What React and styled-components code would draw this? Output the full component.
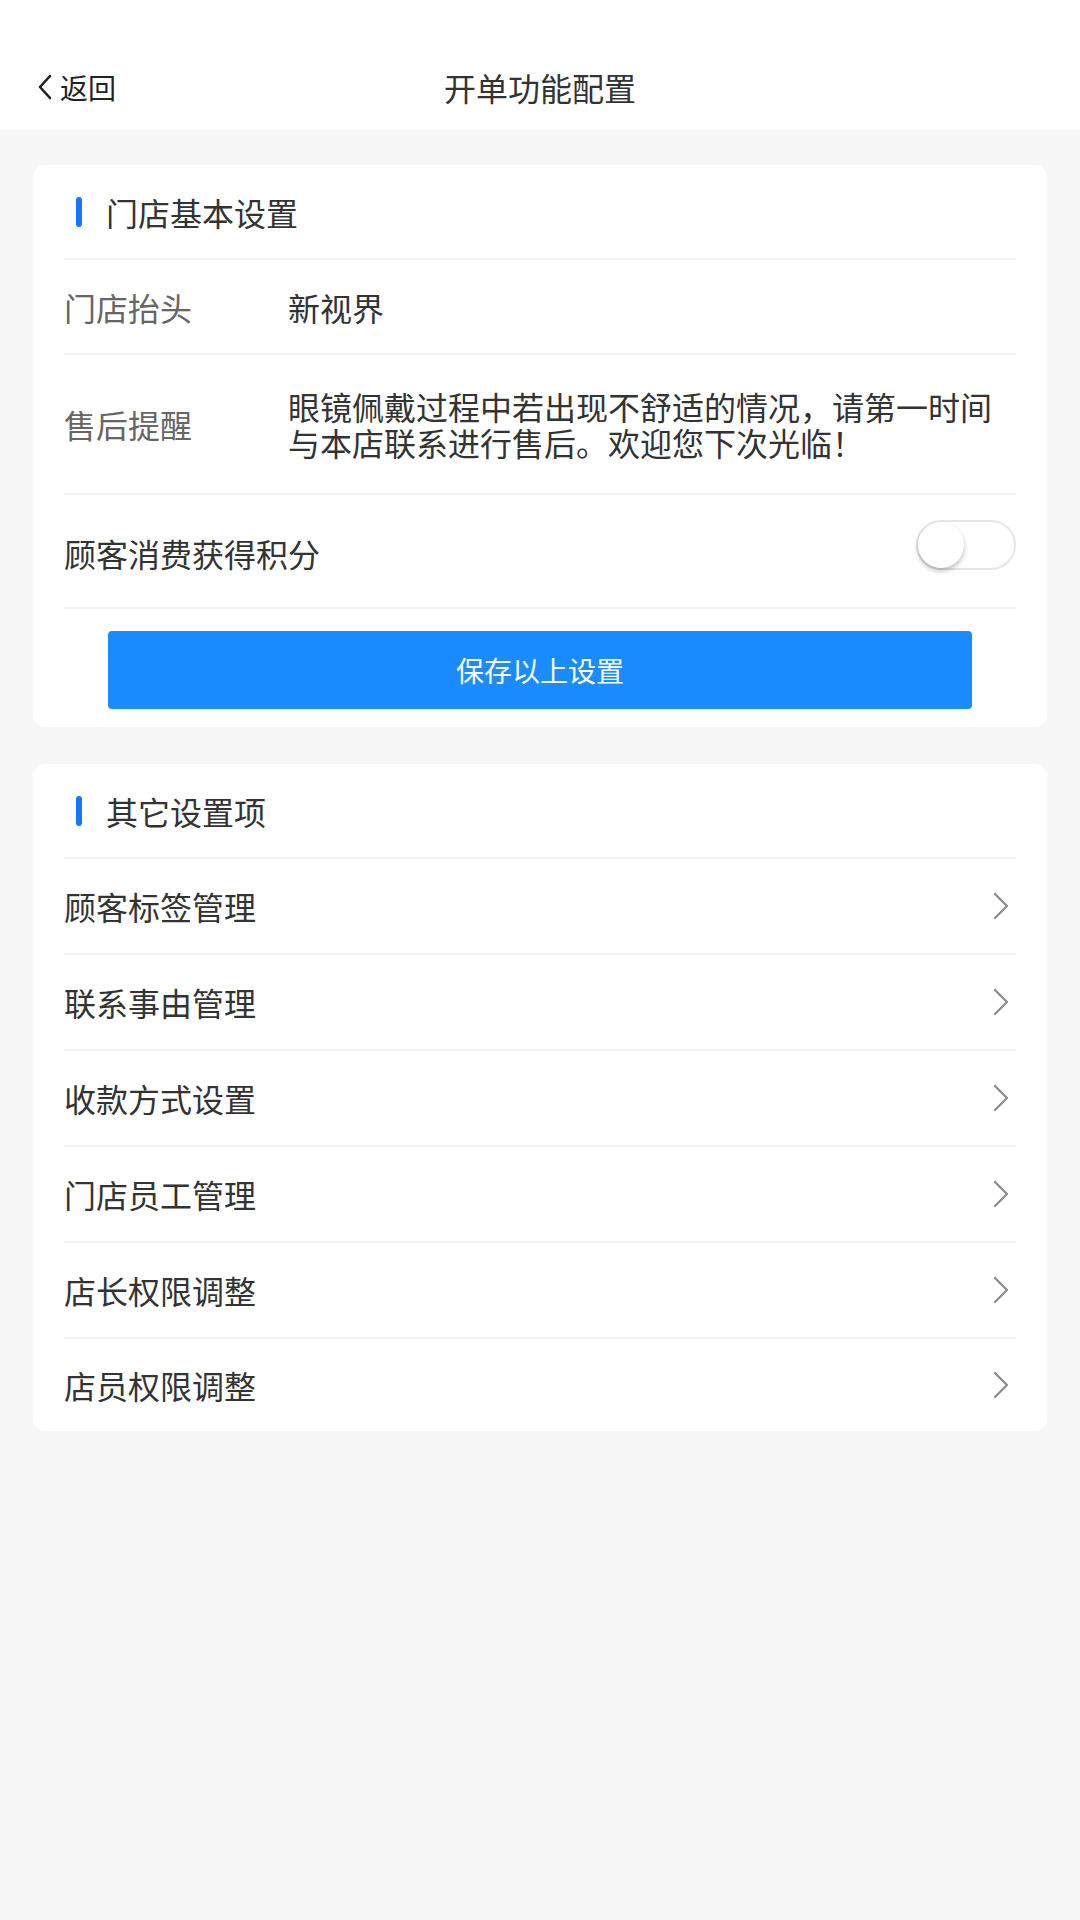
import React, { useState } from 'react'
import styled, { createGlobalStyle } from 'styled-components'

const GlobalStyle = createGlobalStyle`
  html, body {
    margin: 0;
    padding: 0;
    background: #f7f7f7;
    font-family: "Noto Sans CJK SC", "Noto Sans", sans-serif;
    color: #333;
  }
  * { box-sizing: border-box; }
`

const otherItems = [
  '顾客标签管理',
  '联系事由管理',
  '收款方式设置',
  '门店员工管理',
  '店长权限调整',
  '店员权限调整',
]

const App = () => {
  const [points, setPoints] = useState(false)

  return (
    <Page>
      <GlobalStyle />
      <Header>
        <NavBar>
          <Back>
            <svg width="16" height="26" viewBox="0 0 16 26" fill="none">
              <path d="M13 2 L3 13 L13 24" stroke="#222" strokeWidth="2.6" strokeLinecap="round" strokeLinejoin="round" />
            </svg>
            返回
          </Back>
          <Title>开单功能配置</Title>
        </NavBar>
      </Header>

      <Body>
        <Card>
          <SectionHead>门店基本设置</SectionHead>
          <FieldRow>
            <FieldLabel>门店抬头</FieldLabel>
            <FieldValue>新视界</FieldValue>
          </FieldRow>
          <FieldRow $tall>
            <FieldLabel>售后提醒</FieldLabel>
            <FieldValue>眼镜佩戴过程中若出现不舒适的情况，请第一时间与本店联系进行售后。欢迎您下次光临！</FieldValue>
          </FieldRow>
          <SwitchRow>
            <SwitchLabel>顾客消费获得积分</SwitchLabel>
            <Switch $on={points} onClick={() => setPoints(!points)}>
              <Knob $on={points} />
            </Switch>
          </SwitchRow>
          <ButtonWrap>
            <SaveButton>保存以上设置</SaveButton>
          </ButtonWrap>
        </Card>

        <Card>
          <SectionHead>其它设置项</SectionHead>
          {otherItems.map((item) => (
            <LinkRow key={item}>
              <span>{item}</span>
              <svg width="18" height="30" viewBox="0 0 18 30" fill="none">
                <path d="M3 3 L15 15 L3 27" stroke="#8a8a8a" strokeWidth="2.2" strokeLinecap="round" strokeLinejoin="round" />
              </svg>
            </LinkRow>
          ))}
        </Card>
      </Body>
    </Page>
  )
}

export default App

const Page = styled.div`
  min-height: 1920px;
  background: #f7f7f7;
`

const Header = styled.header`
  height: 130px;
  background: #fff;
  display: flex;
  align-items: flex-end;
`

const NavBar = styled.div`
  position: relative;
  width: 100%;
  height: 86px;
  display: flex;
  align-items: center;
  justify-content: center;
`

const Back = styled.div`
  position: absolute;
  left: 37px;
  top: 0;
  bottom: 0;
  display: flex;
  align-items: center;
  gap: 7px;
  font-size: 28px;
  color: #222;
`

const Title = styled.h1`
  margin: 0;
  font-size: 32px;
  font-weight: 400;
  color: #333;
`

const Body = styled.main`
  padding: 35px 33px;
  display: flex;
  flex-direction: column;
  gap: 37px;
`

const Card = styled.section`
  background: #fff;
  border-radius: 12px;
  padding: 0 31px;
`

const SectionHead = styled.div`
  height: 95px;
  display: flex;
  align-items: center;
  gap: 24px;
  padding-left: 12px;
  font-size: 32px;
  color: #333;
  border-bottom: 2px solid #f3f3f3;

  &::before {
    content: '';
    width: 6px;
    height: 30px;
    border-radius: 3px;
    background: #1577ff;
  }
`

const FieldRow = styled.div`
  display: flex;
  align-items: center;
  min-height: ${(p) => (p.$tall ? '140px' : '95px')};
  padding: 14px 0;
  border-bottom: 2px solid #f3f3f3;
`

const FieldLabel = styled.div`
  width: 224px;
  flex-shrink: 0;
  font-size: 32px;
  color: #666;
`

const FieldValue = styled.div`
  flex: 1;
  font-size: 32px;
  line-height: 36px;
  color: #333;
`

const SwitchRow = styled.div`
  height: 114px;
  display: flex;
  align-items: center;
  justify-content: space-between;
  border-bottom: 2px solid #f3f3f3;
`

const SwitchLabel = styled.span`
  font-size: 32px;
  color: #333;
  padding-top: 4px;
`

const Switch = styled.div`
  position: relative;
  width: 100px;
  height: 50px;
  margin-top: -12px;
  border-radius: 25px;
  border: 2px solid #e6e6e6;
  background: ${(p) => (p.$on ? '#1a8cff' : '#fff')};
  cursor: pointer;
`

const Knob = styled.div`
  position: absolute;
  top: 0;
  left: ${(p) => (p.$on ? '50px' : '0')};
  width: 46px;
  height: 46px;
  border-radius: 50%;
  background: #fff;
  box-shadow: 0 3px 5px rgba(0, 0, 0, 0.25);
`

const ButtonWrap = styled.div`
  padding: 22px 44px 18px;
`

const SaveButton = styled.button`
  width: 100%;
  height: 78px;
  border: none;
  border-radius: 4px;
  background: #1a8cff;
  color: #fff;
  font-family: inherit;
  font-size: 28px;
  cursor: pointer;
`

const LinkRow = styled.div`
  height: 96px;
  display: flex;
  align-items: center;
  justify-content: space-between;
  padding-right: 6px;
  font-size: 32px;
  color: #333;
  border-bottom: 2px solid #f3f3f3;

  &:last-child {
    height: 92px;
    border-bottom: none;
  }
`
